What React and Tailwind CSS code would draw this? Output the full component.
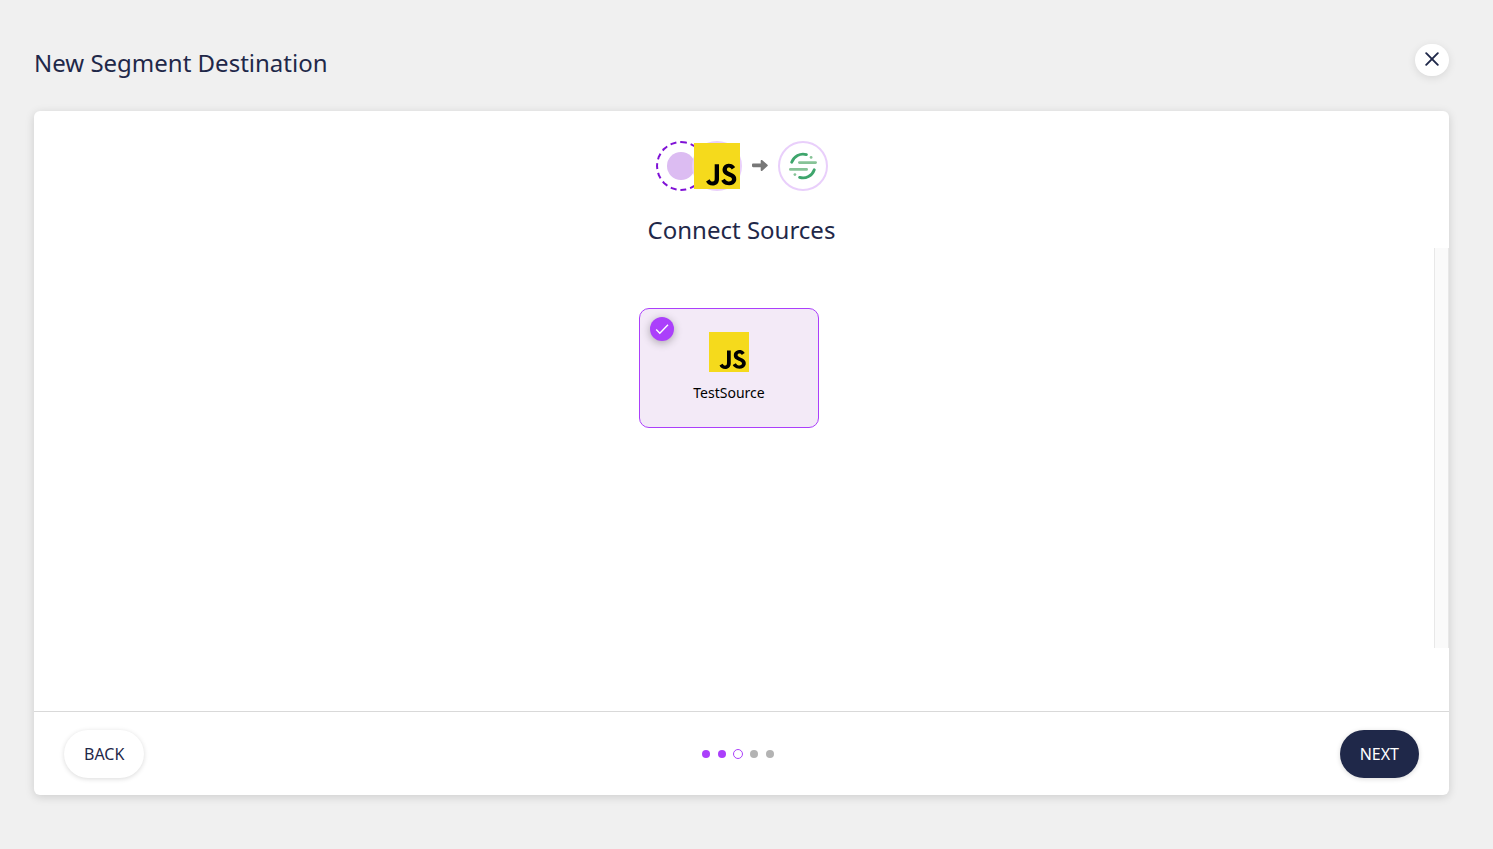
import { SiJavascript } from "react-icons/si";

function JavaScriptLogo({ className }) {
  return (
    <svg viewBox="0 0 24 24" className={className} aria-hidden="true">
      <rect x="1" y="1" width="22" height="22" fill="#000" />
      <SiJavascript size={24} color="#f5da1c" />
    </svg>
  );
}

function SegmentLogo() {
  return (
    <svg viewBox="0 0 28 28" className="size-7" fill="none" strokeLinecap="round" aria-hidden="true">
      <path d="M2.7 10.2A11.9 11.9 0 0 1 17.4 2.6" stroke="#3ea56c" strokeWidth="2.8" />
      <path d="M25.3 17.8A11.9 11.9 0 0 1 10.6 25.4" stroke="#3ea56c" strokeWidth="2.8" />
      <path d="M10.4 10.6H26.6M1.4 17.4H17.6" stroke="#87c397" strokeWidth="2.8" />
      <circle cx="22.1" cy="5.4" r="1.4" fill="#87c397" />
      <circle cx="5.9" cy="22.6" r="1.4" fill="#87c397" />
    </svg>
  );
}

function ConnectionDiagram() {
  return (
    <div className="flex items-center justify-center gap-2.5">
      <div className="flex">
        <div className="flex size-[50px] items-center justify-center rounded-full border-2 border-dashed border-[#7f11d6]">
          <span className="size-7 rounded-full bg-[#dcbcf2]" />
        </div>
        <div className="relative -ml-3.5 flex size-[50px] items-center justify-center rounded-full border-2 border-[#e9cffb] bg-white">
          <JavaScriptLogo className="size-[46px] shrink-0" />
        </div>
      </div>
      <svg viewBox="0 0 16 12" className="h-3 w-4" aria-hidden="true">
        <path
          d="M1.2 3.600H8.7V.900c0-.9 1-1.3 1.6-.7l5.2 4.600c.4.4.4.9 0 1.3l-5.2 4.600c-.6.6-1.6.2-1.6-.7V7.300H1.2C.5 7.300 0 6.800 0 6.100V4.800C0 4.100.5 3.600 1.2 3.600z"
          fill="#777"
        />
      </svg>
      <div className="flex size-[50px] items-center justify-center rounded-full border-2 border-[#e9cffb] bg-white">
        <SegmentLogo />
      </div>
    </div>
  );
}

function SourceCard({ name }) {
  return (
    <button
      type="button"
      aria-pressed="true"
      className="relative mr-2.5 flex h-[120px] w-[180px] flex-col items-center rounded-[10px] border border-[#ab3ffb] bg-[#f3eaf7] pt-[23px] text-sm text-black"
    >
      <span className="absolute top-2 left-2.5 flex size-6 items-center justify-center rounded-full bg-[#ab3ffb] shadow-[0_2px_8px_rgba(0,0,0,0.3)]">
        <svg viewBox="0 0 24 24" className="size-6" fill="none" stroke="#fff" strokeWidth="1.4" aria-hidden="true">
          <path d="M6.2 12.6 9.8 16.2 18 7.8" />
        </svg>
      </span>
      <JavaScriptLogo className="size-10" />
      <span className="mt-[11px]">{name}</span>
    </button>
  );
}

function Steps() {
  return (
    <ol className="mr-2 flex items-center gap-2" aria-label="Progress">
      <li className="size-2 rounded-full bg-[#ab3ffb]" />
      <li className="size-2 rounded-full bg-[#ab3ffb]" />
      <li className="-mx-px size-2.5 rounded-full border border-[#ab3ffb] bg-white" aria-current="step" />
      <li className="size-2 rounded-full bg-[#b3b3b3]" />
      <li className="size-2 rounded-full bg-[#b3b3b3]" />
    </ol>
  );
}

export default function App() {
  return (
    <div className="min-h-screen bg-[#f0f0f0] pt-11 pr-11 pb-[54px] pl-[34px] font-['Noto_Sans',sans-serif] text-[#1f2849]">
      <header className="flex items-start justify-between">
        <h1 className="pt-px text-2xl leading-9">New Segment Destination</h1>
        <button
          type="button"
          aria-label="Close"
          className="flex h-8 w-[34px] items-center justify-center rounded-full bg-white shadow-[0_2px_8px_rgba(0,0,0,0.1)]"
        >
          <svg viewBox="0 0 14 14" className="mb-0.5 size-3.5" fill="none" stroke="#1f2849" strokeWidth="1.9" strokeLinecap="round" aria-hidden="true">
            <path d="M1.2 1.2 12.8 12.8M12.8 1.2 1.2 12.8" />
          </svg>
        </button>
      </header>

      <main className="mt-[30px] flex flex-col rounded-md bg-white shadow-[0_2px_10px_rgba(0,0,0,0.15)]">
        <div className="pt-[30px]">
          <ConnectionDiagram />
          <h2 className="mt-[21px] text-center text-2xl leading-9">Connect Sources</h2>
        </div>

        <section className="flex h-[400px]" aria-label="Sources">
          <div className="flex flex-1 items-start justify-center pt-[60px]">
            <SourceCard name="TestSource" />
          </div>
          <div className="w-[15px] border-x border-[#e8e8e8] bg-[#fafafa]" />
        </section>

        <footer className="mt-[63px] grid grid-cols-[1fr_auto_1fr] items-center border-t border-[#d9d9d9] px-[30px] pt-[18px] pb-[17px]">
          <button type="button" className="h-12 justify-self-start rounded-full bg-white px-5 shadow-[0_1px_5px_rgba(0,0,0,0.15)]">
            BACK
          </button>
          <Steps />
          <button type="button" className="h-12 justify-self-end rounded-full bg-[#1f2849] px-5 text-white shadow-[0_1px_5px_rgba(0,0,0,0.15)]">
            NEXT
          </button>
        </footer>
      </main>
    </div>
  );
}
